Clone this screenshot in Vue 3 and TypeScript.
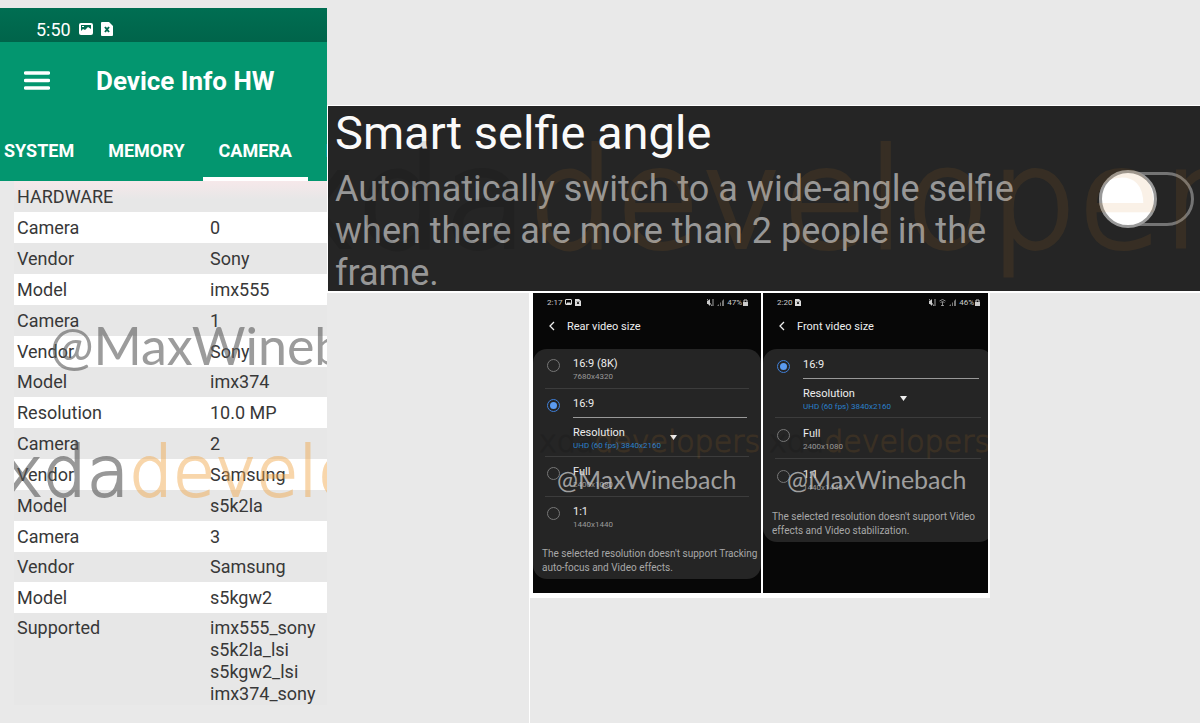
<script setup lang="ts">
import { ref } from 'vue'

interface SpecRow {
  name: string
  values: string[]
}
interface VideoOption {
  id: string
  label: string
  size?: string
}
interface VideoScreen {
  id: string
  time: string
  hasPicture: boolean
  hasWifi: boolean
  battery: string
  title: string
  options: VideoOption[]
  note: string
}

const tabs = ['SYSTEM', 'MEMORY', 'CAMERA', 'NETWORK']
const activeTab = ref('CAMERA')
const smartAngle = ref(false)

const rows: SpecRow[] = [
  { name: 'Camera', values: ['0'] },
  { name: 'Vendor', values: ['Sony'] },
  { name: 'Model', values: ['imx555'] },
  { name: 'Camera', values: ['1'] },
  { name: 'Vendor', values: ['Sony'] },
  { name: 'Model', values: ['imx374'] },
  { name: 'Resolution', values: ['10.0 MP'] },
  { name: 'Camera', values: ['2'] },
  { name: 'Vendor', values: ['Samsung'] },
  { name: 'Model', values: ['s5k2la'] },
  { name: 'Camera', values: ['3'] },
  { name: 'Vendor', values: ['Samsung'] },
  { name: 'Model', values: ['s5kgw2'] },
  { name: 'Supported', values: ['imx555_sony', 's5k2la_lsi', 's5kgw2_lsi', 'imx374_sony'] },
]

const screens: VideoScreen[] = [
  {
    id: 'rear',
    time: '2:17',
    hasPicture: true,
    hasWifi: false,
    battery: '47%',
    title: 'Rear video size',
    options: [
      { id: '8k', label: '16:9 (8K)', size: '7680x4320' },
      { id: 'wide', label: '16:9' },
      { id: 'full', label: 'Full', size: '2400x1080' },
      { id: 'square', label: '1:1', size: '1440x1440' },
    ],
    note: "The selected resolution doesn't support Tracking auto-focus and Video effects.",
  },
  {
    id: 'front',
    time: '2:20',
    hasPicture: false,
    hasWifi: true,
    battery: '46%',
    title: 'Front video size',
    options: [
      { id: 'wide', label: '16:9' },
      { id: 'full', label: 'Full', size: '2400x1080' },
      { id: 'square', label: '1:1', size: '1440x1440' },
    ],
    note: "The selected resolution doesn't support Video effects and Video stabilization.",
  },
]
const chosen = ref<Record<string, string>>({ rear: 'wide', front: 'wide' })
</script>

<template>
  <main class="board">
    <section class="info">
      <header class="appbar">
        <div class="clock">
          <span>5:50</span>
          <svg width="14" height="14" viewBox="0 0 14 14"><rect x="0" y="1" width="14" height="12" rx="2" fill="#fff" /><path d="M2 3h10v4L9 5 6 8 4 7 2 9z" fill="#006b50" /><path d="M3 4h2v1H3z" fill="#fff" /></svg>
          <svg width="12" height="14" viewBox="0 0 12 14"><path d="M1 0h7l4 4v9a1 1 0 0 1-1 1H1a1 1 0 0 1-1-1V1a1 1 0 0 1 1-1z" fill="#fff" /><path d="M4 5l4 5M8 5l-4 5" stroke="#006b50" stroke-width="2" /></svg>
        </div>
        <div class="titlebar">
          <button class="plain" aria-label="Menu">
            <svg width="26" height="19" viewBox="0 0 26 19"><path d="M1.500 2h23M1.500 9.500h23M1.500 17h23" stroke="#fff" stroke-width="3.500" stroke-linecap="round" /></svg>
          </button>
          <h1>Device Info HW</h1>
        </div>
        <nav class="tabs">
          <button v-for="t in tabs" :key="t" class="tab" :class="{ active: t === activeTab }" @click="activeTab = t">{{ t }}</button>
        </nav>
      </header>
      <table class="specs">
        <thead>
          <tr><th colspan="2">HARDWARE</th></tr>
        </thead>
        <tbody>
          <tr v-for="(row, i) in rows" :key="i">
            <td class="name">{{ row.name }}</td>
            <td><div v-for="v in row.values" :key="v">{{ v }}</div></td>
          </tr>
        </tbody>
      </table>
      <div class="mark handle info-handle">@MaxWinebach</div>
      <div class="mark xda info-xda"><span class="grey">xda</span><span class="amber">developers</span></div>
    </section>

    <div class="right">
      <section class="setting">
        <div class="copy">
          <h2><label for="smart-angle">Smart selfie angle</label></h2>
          <p>Automatically switch to a wide-angle selfie when there are more than 2 people in the frame.</p>
        </div>
        <input id="smart-angle" v-model="smartAngle" class="switch" type="checkbox" role="switch" />
        <div class="mark xda setting-xda"><span class="grey">xda</span><span class="amber">developers</span></div>
      </section>

      <div class="gallery">
        <div class="phones">
          <section v-for="s in screens" :key="s.id" class="phone" :class="s.id">
            <div class="status">
              <span>{{ s.time }}</span>
              <svg v-if="s.hasPicture" width="7" height="6" viewBox="0 0 7 6"><rect x=".5" y=".5" width="6" height="5" rx=".5" fill="none" stroke="#ddd" /><path d="M1 5l2-2 1 1 1-1 1 2z" fill="#ddd" /></svg>
              <svg width="6" height="7" viewBox="0 0 6 7"><path d="M0 0h4l2 2v5H0z" fill="#ddd" /><path d="M2 2.500l2 2.500M4 2.500L2 5" stroke="#111" /></svg>
              <span class="fill"></span>
              <svg width="7" height="7" viewBox="0 0 7 7"><path d="M0 2h1l2-2v7L1 5H0z" fill="#ccc" /><path d="M0 0l5 7M6 0v7" stroke="#ccc" stroke-width=".8" /></svg>
              <svg v-if="s.hasWifi" width="7" height="7" viewBox="0 0 7 7"><path d="M.5 2q3-3 6 0M1.500 3.500q2-2 4 0M3.500 3v4M2 6.500h3" fill="none" stroke="#aaa" stroke-width=".8" /></svg>
              <svg width="7" height="7" viewBox="0 0 7 7"><path d="M0 7l2-2v2zM3 7V4l1-1v4zM5 7V2l2-2v7z" fill="#777" /></svg>
              <span class="battery">{{ s.battery }}<svg width="5" height="7" viewBox="0 0 5 7"><rect y="3" width="5" height="4" fill="#ccc" /><path d="M1 3V1h3v2" fill="none" stroke="#ccc" /></svg></span>
            </div>
            <div class="heading">
              <button class="plain" aria-label="Back">
                <svg width="6" height="10" viewBox="0 0 6 10"><path d="M5 1L1 5l4 4" fill="none" stroke="#eee" stroke-width="1.300" /></svg>
              </button>
              <h3>{{ s.title }}</h3>
            </div>
            <div class="card">
              <div v-for="o in s.options" :key="o.id" class="option">
                <input :id="`${s.id}-${o.id}`" v-model="chosen[s.id]" type="radio" :name="s.id" :value="o.id" />
                <div class="detail">
                  <label :for="`${s.id}-${o.id}`">{{ o.label }}<small v-if="o.size">{{ o.size }}</small></label>
                  <div v-if="!o.size" class="resolution">
                    <label :for="`${s.id}-res`">Resolution</label>
                    <select :id="`${s.id}-res`"><option>UHD (60 fps) 3840x2160</option></select>
                    <svg class="caret" width="7" height="5" viewBox="0 0 7 5"><path d="M0 0h7L3.500 5z" fill="#eee" /></svg>
                  </div>
                </div>
              </div>
              <p class="note">{{ s.note }}</p>
            </div>
            <div class="mark xda phone-xda"><span class="grey">xda</span><span class="amber">developers</span></div>
            <div class="mark handle phone-handle">@MaxWinebach</div>
          </section>
        </div>
      </div>
    </div>
  </main>
</template>

<style>
body {
  background: #e9e9e9;
}
</style>

<style scoped>
.board {
  display: grid;
  grid-template-columns: 327px 1fr;
  min-height: 100vh;
  box-sizing: border-box;
  overflow: hidden;
  font-family: Roboto, "Liberation Sans", sans-serif;
}
h1, h2, h3, p {
  margin: 0;
  font-weight: 400;
}
button {
  border: 0;
  padding: 0;
  background: none;
  color: inherit;
  font: inherit;
}
svg {
  display: block;
  flex: none;
}
.plain {
  display: block;
}
.mark {
  position: absolute;
  pointer-events: none;
  white-space: nowrap;
  line-height: 1;
}
.handle {
  font-family: Lato, sans-serif;
}
.xda {
  font-family: "DejaVu Sans", sans-serif;
  font-weight: 200;
}

.info {
  position: relative;
  overflow: hidden;
  padding-top: 8px;
}
.appbar {
  background: #03966f;
  color: #fff;
}
.clock {
  display: flex;
  align-items: center;
  gap: 8px;
  height: 34px;
  padding: 8px 0 0 36px;
  box-sizing: border-box;
  background: linear-gradient(#006e52, #00644a);
  font-size: 18px;
}
.titlebar {
  display: flex;
  align-items: center;
  gap: 46px;
  height: 77px;
  padding-left: 24px;
}
h1 {
  font-size: 26px;
  font-weight: 700;
}
.tabs {
  display: flex;
  gap: 2px;
  margin-left: -12px;
}
.tab {
  flex: none;
  height: 62px;
  padding: 0 16px;
  border-top: 4px solid transparent;
  border-bottom: 4px solid transparent;
  font-size: 18px;
  font-weight: 700;
}
.tab.active {
  border-bottom-color: #fff;
}
.specs {
  width: calc(100% - 14px);
  margin-left: 14px;
  border-collapse: collapse;
  color: #383838;
  font-size: 18px;
  line-height: 22px;
}
.specs th {
  height: 31px;
  background: linear-gradient(#f6e8ea, #e7e7e7 60%);
  font-weight: 400;
  text-align: left;
}
.specs th, .specs td {
  padding: 0 0 0 3px;
}
.specs td {
  height: 31px;
  vertical-align: middle;
}
.specs tbody tr:nth-child(6n) td {
  height: 30px;
}
.specs tbody tr:nth-child(odd) {
  background: #fff;
}
.specs tbody tr:nth-child(even) {
  background: #e7e7e7;
}
.specs tbody tr:last-child td {
  padding-top: 4px;
  vertical-align: top;
}
.specs .name {
  width: 190px;
}
.info-handle {
  top: 319px;
  left: 50px;
  color: rgba(90, 90, 90, 0.6);
  font-size: 52px;
}
.info-xda {
  top: 438px;
  left: 14px;
  overflow: hidden;
  font-size: 69px;
  text-indent: -12px;
  -webkit-text-stroke-width: 2px;
}
.info-xda .grey {
  color: #555;
  opacity: 0.6;
}
.info-xda .amber {
  color: #f0a546;
  opacity: 0.45;
}

.right {
  min-width: 0;
  padding-top: 105px;
}
.setting {
  position: relative;
  display: flex;
  align-items: center;
  justify-content: space-between;
  height: 185px;
  overflow: hidden;
  padding: 0 6px 0 7px;
  border: solid #fff;
  border-width: 1px 0 2px 1px;
  background: #252525;
}
.copy {
  align-self: flex-start;
  max-width: 700px;
}
.setting h2 {
  color: #fafafa;
  font-size: 47px;
  line-height: 54px;
}
.setting p {
  margin-top: 8px;
  color: #979797;
  font-size: 36px;
  line-height: 42px;
}
.switch {
  display: flex;
  align-items: center;
  flex: none;
  width: 95px;
  height: 54px;
  margin: 0;
  border: 3px solid #747474;
  border-radius: 27px;
  appearance: none;
}
.switch::before {
  width: 52px;
  height: 52px;
  margin-left: -3px;
  border: 3px solid #999;
  border-radius: 50%;
  background: #fff;
  content: "";
}
.switch:checked {
  justify-content: flex-end;
}
.setting-xda {
  top: 25px;
  left: -54px;
  font-size: 138px;
  -webkit-text-stroke-width: 4px;
}
.setting-xda .grey, .phone-xda .grey {
  color: #000;
  opacity: 0.1;
}
.setting-xda .amber {
  color: #d08020;
  opacity: 0.1;
}
.gallery {
  min-height: 430px;
  box-sizing: border-box;
  margin-left: 202px;
  border-left: 1px solid #fff;
}
.phones {
  display: flex;
  width: fit-content;
  gap: 2px;
  padding: 0 2px 5px 3px;
  background: #fff;
}
.phone {
  position: relative;
  width: 228px;
  height: 300px;
  overflow: hidden;
  background: #070707;
  color: #eee;
  font-size: 11px;
}
.phone.front {
  width: 225px;
}
.status {
  display: flex;
  align-items: center;
  gap: 3px;
  height: 18px;
  padding: 0 13px 0 14px;
  color: #ccc;
  font-size: 8px;
}
.front .status {
  padding-right: 8px;
}
.fill {
  flex: 1;
}
.battery {
  display: flex;
  align-items: center;
  gap: 1px;
}
.heading {
  display: flex;
  align-items: center;
  gap: 12px;
  height: 30px;
  margin-bottom: 8px;
  padding-left: 16px;
}
h3 {
  font-size: 11px;
}
.card {
  padding: 0 12px 4px;
  border-radius: 14px;
  background: #252525;
}
.front .card {
  margin-right: -5px;
}
.option {
  display: flex;
  align-items: flex-start;
  gap: 13px;
  min-height: 40px;
  box-sizing: border-box;
  padding: 8px 2px 0;
  border-bottom: 1px solid #3c3c3c;
}
.front .option {
  min-height: 41px;
  padding-top: 9px;
}
.option:nth-last-child(2) {
  border-bottom: 0;
}
.option input {
  display: grid;
  flex: none;
  place-items: center;
  width: 13px;
  height: 13px;
  margin: 2px 0 0;
  border: 1px solid #777;
  border-radius: 50%;
  appearance: none;
}
.option input:checked {
  border-color: #3f7fd8;
}
.option input:checked::before {
  width: 7px;
  height: 7px;
  border-radius: 50%;
  background: #5b9bf0;
  content: "";
}
.detail {
  flex: 1;
}
.detail label {
  display: block;
  line-height: 14px;
}
.detail small {
  display: block;
  color: #999;
  font-size: 8px;
  line-height: 11px;
}
.resolution {
  position: relative;
  height: 39px;
  box-sizing: border-box;
  margin-top: 6px;
  padding-top: 8px;
  border-top: 1px solid #999;
}
select {
  display: block;
  width: 104px;
  height: 11px;
  padding: 0;
  border: 0;
  background: none;
  color: #2a80cc;
  font: 8px Roboto, sans-serif;
  appearance: none;
}
.caret {
  position: absolute;
  top: 17px;
  left: 97px;
  pointer-events: none;
}
.note {
  margin: 10px -12px 0 -3px;
  color: #a8a8a8;
  font-size: 10px;
  line-height: 14px;
}
.phone-xda {
  top: 134px;
  left: 6px;
  font-size: 30px;
  -webkit-text-stroke-width: 1px;
}
.phone-xda .amber {
  color: #d08020;
  opacity: 0.12;
}
.phone-handle {
  top: 174px;
  left: 24px;
  color: rgba(200, 200, 200, 0.75);
  font-size: 25px;
}
</style>
